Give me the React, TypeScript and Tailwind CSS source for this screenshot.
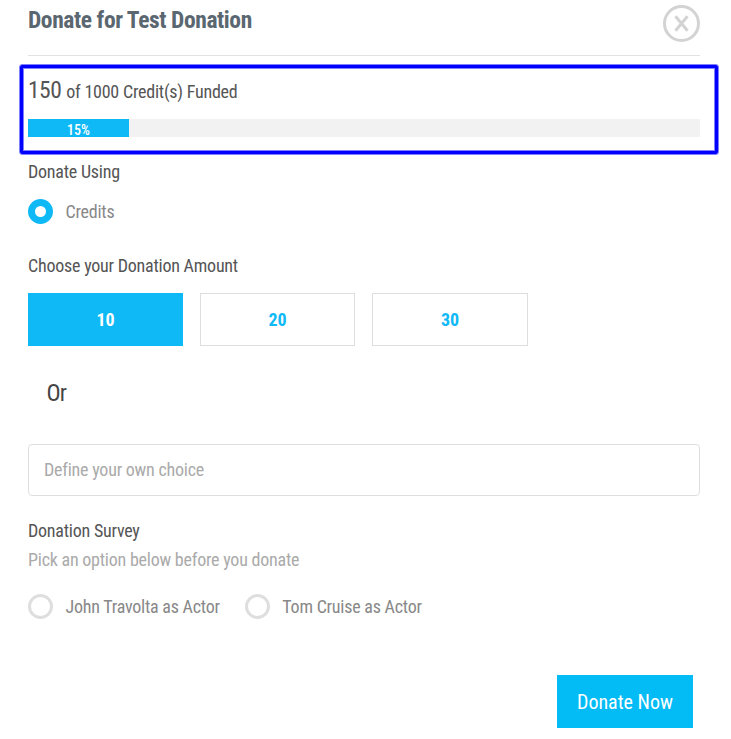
import { useState } from 'react';

const amounts = [10, 20, 30];
const actors = ['John Travolta as Actor', 'Tom Cruise as Actor'];

export default function App() {
  const [amount, setAmount] = useState(10);
  const [actor, setActor] = useState('');
  const funded = 150;
  const goal = 1000;
  const percent = (funded / goal) * 100;

  return (
    <main className="h-[739px] w-[731px] overflow-hidden bg-white pl-[19px] pr-3 font-['Roboto_Condensed','Roboto',sans-serif] text-lg leading-6 tracking-[-0.23px] text-[#555] [font-stretch:75%]">
      <header className="ml-[9px] mr-[19px] flex h-14 justify-between border-b border-[#e2e2e2]">
        <h1 className="pt-1 text-[23.5px] leading-8 font-bold tracking-[-0.41px] text-[#5b6770]">Donate for Test Donation</h1>
        <button aria-label="Close" className="mt-[5px] h-[37px] w-[37px]">
          <CloseIcon />
        </button>
      </header>

      <section className="mt-2 h-[91px] w-[700px] rounded-[3px] border border-[#8080ff]">
        <div className="h-[89px] rounded-[2px] border-3 border-[#0000ff]">
          <div className="h-[83px] border border-[#8080ff] px-1 pt-[7px]">
            <div className="h-7 leading-7 whitespace-nowrap">
              <span className="mr-px text-[23.5px] leading-7 tracking-[-0.5px]">{funded}</span> of {goal} Credit(s) Funded
            </div>
            <div className="mt-[15px] h-[18px] w-[672px] bg-[#f2f2f2]">
              <div
                className="h-[18px] bg-[#0fb9f6] text-center text-sm leading-[22px] font-medium tracking-normal text-white"
                style={{ width: `${percent}%` }}
              >
                {percent}%
              </div>
            </div>
          </div>
        </div>
      </section>

      <div className="ml-[9px] mr-[19px]">
        <h2 className="mt-[5px]">Donate Using</h2>
        <div className="mt-[15px]">
          <Radio label="Credits" checked />
        </div>

        <h2 className="mt-[30px]">Choose your Donation Amount</h2>
        <div className="mt-[15px] flex gap-[17px]">
          {amounts.map((value) => (
            <button
              key={value}
              onClick={() => setAmount(value)}
              className={`h-[53px] w-[155px] border font-bold tracking-normal last:w-[156px] ${
                amount === value
                  ? 'border-[#0fb9f6] bg-[#0fb9f6] text-white'
                  : 'border-[#dedede] bg-white text-[#0fb9f6]'
              }`}
            >
              {value}
            </button>
          ))}
        </div>
        <p className="mt-[31px] ml-[18.5px] text-[23.5px] leading-8 tracking-[-0.8px] text-[#444]">Or</p>
        <input
          type="text"
          placeholder="Define your own choice"
          className="mt-[35px] block h-[52px] w-full rounded border border-[#dedede] px-[15px] pb-[2px] outline-none placeholder:text-[#aaa]"
        />

        <h2 className="mt-[23px]">Donation Survey</h2>
        <p className="mt-[5px] text-[#aaa]">Pick an option below before you donate</p>
        <div className="mt-[22px] flex gap-[25px]">
          {actors.map((name) => (
            <Radio key={name} label={name} checked={actor === name} onClick={() => setActor(name)} />
          ))}
        </div>

        <div className="mt-14 mr-[7px] flex justify-end">
          <button className="h-[53px] w-[136px] bg-[#03bbf5] text-xl tracking-normal text-white">Donate Now</button>
        </div>
      </div>
    </main>
  );
}

interface RadioProps {
  label: string;
  checked: boolean;
  onClick?: () => void;
}

function Radio({ label, checked, onClick }: RadioProps) {
  return (
    <button role="radio" aria-checked={checked} onClick={onClick} className="flex h-[25px] items-center gap-[12.5px] text-[#888]">
      <span
        className={`h-[25px] w-[25px] rounded-full ${
          checked ? 'border-[7.5px] border-[#0fb9f6]' : 'border-[3px] border-[#dedede]'
        }`}
      />
      <span className="whitespace-nowrap">{label}</span>
    </button>
  );
}

function CloseIcon() {
  return (
    <svg width="37" height="37" viewBox="0 0 37 37" fill="none" stroke="#d3d3d3">
      <circle cx="18.5" cy="18.5" r="17" strokeWidth="3" />
      <path d="M12.5 11.2L24.5 25.8M24.5 11.2L12.5 25.8" strokeWidth="3" />
    </svg>
  );
}
